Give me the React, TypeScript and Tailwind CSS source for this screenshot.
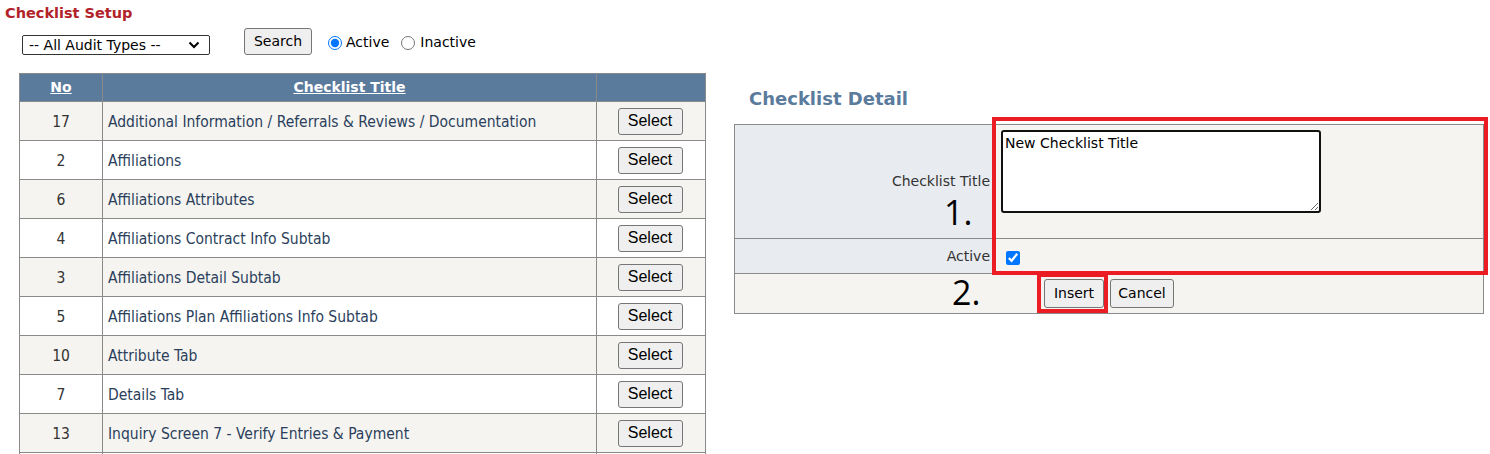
const rows = [
  { no: 17, title: "Additional Information / Referrals & Reviews / Documentation" },
  { no: 2, title: "Affiliations" },
  { no: 6, title: "Affiliations Attributes" },
  { no: 4, title: "Affiliations Contract Info Subtab" },
  { no: 3, title: "Affiliations Detail Subtab" },
  { no: 5, title: "Affiliations Plan Affiliations Info Subtab" },
  { no: 10, title: "Attribute Tab" },
  { no: 7, title: "Details Tab" },
  { no: 13, title: "Inquiry Screen 7 - Verify Entries & Payment" },
];

const SelectButton = () => (
  <button className="h-[27px] w-[65px] rounded-[3px] border border-[#767676] bg-[#efefef] font-['Liberation_Sans',Arial,sans-serif] text-[16px] text-black">
    Select
  </button>
);

const ChecklistTable = () => (
  <table className="w-[687px] border-collapse border border-[#8a8a8a]">
    <thead>
      <tr>
        <th className="h-[28px] w-[83px] border border-[#8a8a8a] bg-[#5b7b9d] text-[14px] font-bold text-white underline">
          No
        </th>
        <th className="h-[28px] w-[494px] border border-[#8a8a8a] bg-[#5b7b9d] text-[14px] font-bold text-white underline">
          Checklist Title
        </th>
        <th className="h-[28px] border border-[#8a8a8a] bg-[#5b7b9d]"></th>
      </tr>
    </thead>
    <tbody className="font-['DejaVu_Sans_Condensed','DejaVu_Sans',sans-serif] text-[15.5px]">
      {rows.map((r, i) => (
        <tr key={r.no} className={i % 2 === 0 ? "bg-[#f5f4f0]" : "bg-white"}>
          <td className="h-[39px] border border-[#8a8a8a] pt-[3px] text-center text-[#333]">
            {r.no}
          </td>
          <td className="h-[39px] border border-[#8a8a8a] pl-[5px] pt-[3px] text-[#2b3f5c]">
            {r.title}
          </td>
          <td className="h-[39px] border border-[#8a8a8a] pr-[2px] text-center">
            <SelectButton />
          </td>
        </tr>
      ))}
      {/* next row, cut off by the window */}
      <tr className="bg-white">
        <td className="h-[39px] border border-[#8a8a8a]"></td>
        <td className="h-[39px] border border-[#8a8a8a]"></td>
        <td className="h-[39px] border border-[#8a8a8a]"></td>
      </tr>
    </tbody>
  </table>
);

const DetailPanel = () => (
  <div className="ml-[28px] pt-[14px]">
    <h2 className="pl-[15px] text-[18px] font-bold leading-[24px] text-[#5b7b9d]">
      Checklist Detail
    </h2>
    <div className="relative mt-[13px]">
      <table className="w-[750px] border-collapse border border-[#8a8a8a] text-[14px] text-[#333]">
        <tbody>
          <tr>
            <td className="h-[114px] w-[260px] border border-[#8a8a8a] bg-[#e8ebf0] pr-[4px] text-right align-middle">
              Checklist Title
            </td>
            <td className="h-[114px] border border-[#8a8a8a] bg-[#f5f4f0] px-[6px] pt-[5px] align-top">
              <textarea
                defaultValue="New Checklist Title"
                className="block h-[83px] w-[320px] rounded-[3px] border-2 border-[#111] bg-white px-[2px] py-[1px] text-[14px] leading-[20px] text-black"
              />
            </td>
          </tr>
          <tr>
            <td className="h-[35px] border border-[#8a8a8a] bg-[#e8ebf0] pr-[4px] text-right">
              Active
            </td>
            <td className="h-[35px] border border-[#8a8a8a] bg-[#f5f4f0] pl-[11px]">
              <input type="checkbox" defaultChecked className="mt-[3px] h-[14px] w-[14px] align-middle" />
            </td>
          </tr>
          <tr>
            <td colSpan={2} className="h-[40px] border border-[#8a8a8a] bg-[#f5f4f0] text-center">
              <div className="flex justify-center gap-[6px]">
                <button className="h-[29px] w-[60px] rounded-[3px] border border-[#767676] bg-[#efefef] text-[14px] text-black">
                  Insert
                </button>
                <button className="h-[29px] w-[64px] rounded-[3px] border border-[#767676] bg-[#efefef] text-[14px] text-black">
                  Cancel
                </button>
              </div>
            </td>
          </tr>
        </tbody>
      </table>
      {/* annotations */}
      <div className="pointer-events-none absolute left-[258px] top-[-7px] h-[158px] w-[496px] border-4 border-[#ec1c24]" />
      <div className="pointer-events-none absolute left-[303px] top-[149px] h-[40px] w-[71px] border-4 border-[#ec1c24]" />
      <span className="absolute left-[210px] top-[68px] font-['Open_Sans',sans-serif] text-[34px] leading-[40px] text-black">
        1.
      </span>
      <span className="absolute left-[218px] top-[148px] font-['Open_Sans',sans-serif] text-[34px] leading-[40px] text-black">
        2.
      </span>
    </div>
  </div>
);

export default function App() {
  return (
    <div className="h-[454px] w-[1490px] overflow-hidden bg-white font-['DejaVu_Sans',Verdana,sans-serif] text-[14px] text-[#222]">
      <h1 className="pl-[5px] pt-[3px] text-[14.5px] font-bold leading-[20px] text-[#b2222a]">
        Checklist Setup
      </h1>
      <div className="mt-[5px] flex h-[27px] items-end">
        <div className="relative ml-[22px] h-[20px] w-[188px]">
          <select className="h-[20px] w-[188px] appearance-none rounded-[2px] border border-[#333] bg-white pl-[6px] text-[14px] leading-[18px] text-black">
            <option>-- All Audit Types --</option>
          </select>
          <svg
            className="pointer-events-none absolute right-[10px] top-[6px]"
            width="12"
            height="8"
            viewBox="0 0 12 8"
          >
            <path d="M1.5 1.5 6 6l4.5-4.5" fill="none" stroke="#000" strokeWidth="2" />
          </svg>
        </div>
        <button className="ml-[34px] h-[27px] w-[68px] rounded-[3px] border border-[#767676] bg-[#efefef] text-[14px] text-black">
          Search
        </button>
        <label className="mb-[2px] ml-[16px] flex items-center gap-[4px] text-black">
          <input type="radio" name="status" defaultChecked className="m-0 h-[14px] w-[14px]" />
          Active
        </label>
        <label className="mb-[2px] ml-[12px] flex items-center gap-[5px] text-black">
          <input type="radio" name="status" className="m-0 h-[14px] w-[14px]" />
          Inactive
        </label>
      </div>
      <div className="mt-[18px] flex items-start">
        <div className="ml-[19px]">
          <ChecklistTable />
        </div>
        <DetailPanel />
      </div>
    </div>
  );
}
